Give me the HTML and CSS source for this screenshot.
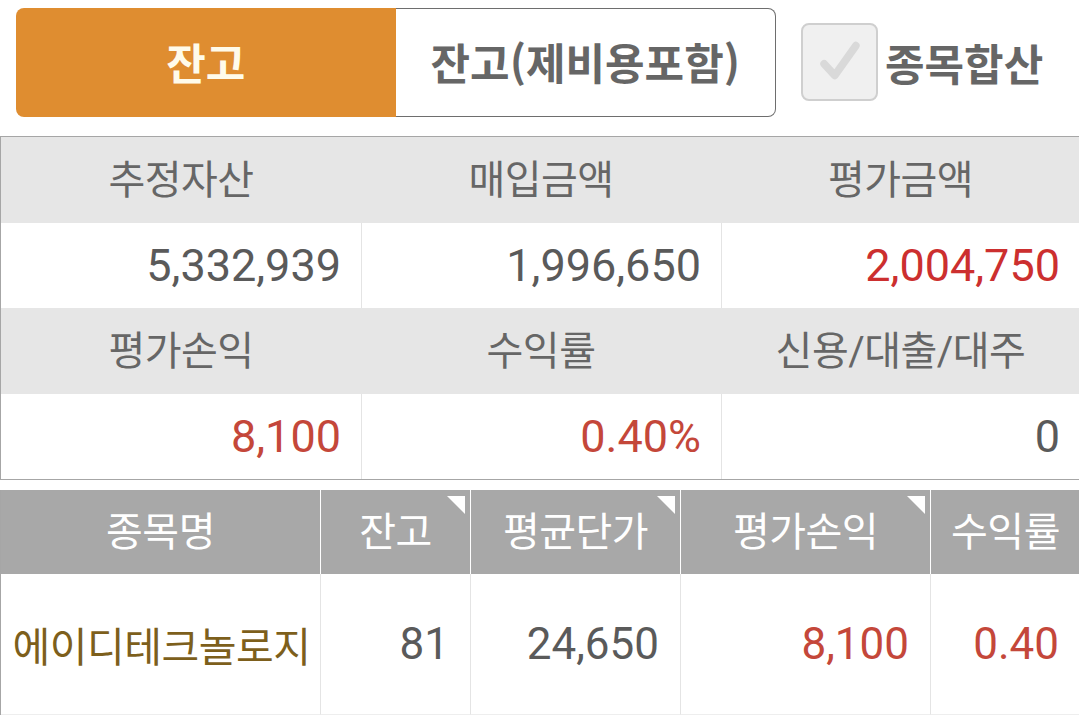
FILE: index.html
```html
<!DOCTYPE html>
<html lang="ko">
<head>
<meta charset="utf-8">
<link rel="stylesheet" href="styles.css">
</head>
<body>
<div class="top">
  <div class="seg">
    <div class="seg-btn on">잔고</div>
    <div class="seg-btn off">잔고(제비용포함)</div>
  </div>
  <div class="chk">
    <div class="box">
      <svg width="76" height="76" viewBox="0 0 76 76"><polyline points="22,40 33,52 55,21" fill="none" stroke="#d9d9d9" stroke-width="8" stroke-linecap="round" stroke-linejoin="round"/></svg>
    </div>
    <span class="chk-label">종목합산</span>
  </div>
</div>

<div class="sum">
  <div class="h">추정자산</div>
  <div class="h">매입금액</div>
  <div class="h">평가금액</div>
  <div class="v">5,332,939</div>
  <div class="v">1,996,650</div>
  <div class="v red2">2,004,750</div>
  <div class="h">평가손익</div>
  <div class="h">수익률</div>
  <div class="h">신용/대출/대주</div>
  <div class="v red">8,100</div>
  <div class="v red">0.40%</div>
  <div class="v">0</div>
</div>

<div class="list">
  <div class="lh">종목명</div>
  <div class="lh tri">잔고</div>
  <div class="lh tri">평균단가</div>
  <div class="lh tri">평가손익</div>
  <div class="lh">수익률</div>
  <div class="ld name">에이디테크놀로지</div>
  <div class="ld num">81</div>
  <div class="ld num">24,650</div>
  <div class="ld num red">8,100</div>
  <div class="ld num red">0.40</div>
</div>
</body>
</html>
```

FILE: styles.css
```css
* { box-sizing: border-box; }
html, body { margin: 0; padding: 0; background: #fff; }
body {
  width: 1079px;
  height: 724px;
  overflow: hidden;
  font-family: Roboto, "Noto Sans CJK KR", sans-serif;
  color: #5a5a5a;
}

.top {
  display: flex;
  align-items: center;
  padding: 7px 0 0 16px;
  height: 117px;
}
.seg {
  display: flex;
  width: 760px;
  height: 109px;
}
.seg-btn {
  flex: 1;
  display: flex;
  align-items: center;
  justify-content: center;
  font-family: "Noto Sans CJK KR", sans-serif;
  font-weight: 700;
  font-size: 43px;
  padding-bottom: 2px;
}
.seg-btn.on {
  background: #df8d30;
  color: #fffbea;
  border-radius: 8px 0 0 8px;
}
.seg-btn.off {
  background: #fff;
  color: #666;
  border: 1px solid #6e6e6e;
  border-left: none;
  border-radius: 0 8px 8px 0;
}
.chk {
  display: flex;
  align-items: center;
  margin-left: 25px;
}
.box {
  width: 77px;
  height: 78px;
  border: 2px solid #cfcfcf;
  border-radius: 8px;
  background: #f0f0f0;
  display: flex;
  align-items: center;
  justify-content: center;
}
.box svg { display: block; }
.chk-label {
  margin-left: 7px;
  font-family: "Noto Sans CJK KR", sans-serif;
  font-weight: 700;
  font-size: 43px;
  color: #666;
}

.sum {
  margin-top: 19px;
  display: grid;
  grid-template-columns: 360px 360px 359px;
  grid-auto-rows: 85.5px;
  border: 1px solid #a6a6a6;
  border-right: none;
}
.sum .h {
  background: #e6e6e6;
  display: flex;
  align-items: center;
  justify-content: center;
  font-size: 40px;
  color: #666;
  letter-spacing: -0.5px;
  padding-bottom: 6px;
}
.sum .v {
  background: #fff;
  display: flex;
  align-items: center;
  justify-content: flex-end;
  padding-right: 20px;
  font-size: 45px;
  color: #5a5a5a;
  border-left: 1px solid #e4e4e4;
}
.sum .v:nth-child(3n+1) { border-left: none; }
.red { color: #c4473a !important; }
.red2 { color: #cc2f2f !important; }

.list {
  margin-top: 10px;
  display: grid;
  grid-template-columns: 319px 150px 210px 250px 150px;
  grid-template-rows: 84px 141px;
  border-left: 1px solid #a6a6a6;
}
.lh {
  position: relative;
  background: #a8a8a8;
  color: #fff;
  display: flex;
  align-items: center;
  justify-content: center;
  font-size: 40px;
  letter-spacing: -0.5px;
  border-left: 1px solid #fff;
  padding-bottom: 6px;
}
.lh:first-child { border-left: none; }
.lh.tri::after {
  content: "";
  position: absolute;
  top: 6px;
  right: 5px;
  width: 0;
  height: 0;
  border-top: 18px solid #fff;
  border-left: 18px solid transparent;
}
.ld {
  background: #fff;
  display: flex;
  align-items: center;
  font-size: 44px;
  border-left: 1px solid #e4e4e4;
  border-bottom: 1px solid #eeeeee;
}
.ld.name {
  border-left: none;
  justify-content: center;
  color: #7d5f1c;
  font-size: 41px;
  letter-spacing: -0.5px;
  padding-left: 2px;
}
.ld.num {
  justify-content: flex-end;
  padding-right: 21px;
  color: #5a5a5a;
}
```
